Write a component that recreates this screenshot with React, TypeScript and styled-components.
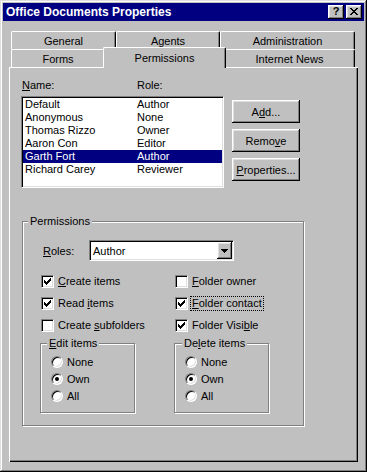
import React from "react";
import styled, { createGlobalStyle, css } from "styled-components";

const Global = createGlobalStyle`
  html, body { margin: 0; padding: 0; background: #c0c0c0; }
  body { font-family: "Liberation Sans", Arial, sans-serif; font-size: 11px; color: #000; }
  * { box-sizing: border-box; }
`;

const raised = css`
  box-shadow: inset -1px -1px #000, inset 1px 1px #fff, inset -2px -2px #808080, inset 2px 2px #dfdfdf;
`;

const sunken = css`
  border: 1px solid;
  border-color: #808080 #fff #fff #808080;
  box-shadow: inset 1px 1px #000, inset -1px -1px #dfdfdf;
`;

const Window = styled.div`
  width: 367px;
  height: 472px;
  background: #c0c0c0;
  padding: 3px;
  box-shadow: inset -1px -1px #000, inset 1px 1px #dfdfdf, inset -2px -2px #808080, inset 2px 2px #fff;
  display: flex;
  flex-direction: column;
`;

const TitleBar = styled.div`
  height: 18px;
  background: #000080;
  display: flex;
  align-items: center;
  padding: 0 2px 0 3px;
  gap: 2px;
`;

const TitleText = styled.div`
  flex: 1;
  color: #fff;
  font-weight: bold;
  font-size: 12px;
`;

const CaptionButton = styled.div`
  width: 16px;
  height: 14px;
  background: #c0c0c0;
  ${raised};
  display: flex;
  align-items: center;
  justify-content: center;
  font-weight: bold;
  font-size: 11px;
  line-height: 1;
  padding-bottom: 1px;
`;

const Body = styled.div`
  flex: 1;
  display: flex;
  flex-direction: column;
  padding: 10px 6px 7px 6px;
`;

const TabRow = styled.div`
  display: flex;
  align-items: flex-end;
  height: 18px;
  padding-left: 2px;
`;

const Tab = styled.div<{ $w: number; $sel?: boolean }>`
  width: ${(p) => p.$w}px;
  height: 18px;
  flex: none;
  display: flex;
  align-items: center;
  justify-content: center;
  background: #c0c0c0;
  border-top: 1px solid #fff;
  border-left: 1px solid #fff;
  border-right: 1px solid #000;
  border-radius: 2px 2px 0 0;
  box-shadow: inset -1px 0 #808080;
  ${(p) =>
    p.$sel &&
    css`
      width: ${p.$w + 4}px;
      height: 21px;
      margin: 0 -2px -1px;
      position: relative;
      z-index: 1;
    `}
`;

const Panel = styled.div`
  flex: 1;
  box-shadow: inset 1px 1px #fff, inset -1px -1px #000, inset -2px -2px #808080;
  padding: 12px 0 0 12px;
`;

const TopSection = styled.div`
  display: flex;
`;

const LeftCol = styled.div`
  width: 203px;
`;

const LabelRow = styled.div`
  display: flex;
  height: 13px;
  line-height: 13px;
  margin-bottom: 4px;
`;

const ColLabel = styled.div<{ $w?: number }>`
  width: ${(p) => (p.$w ? `${p.$w}px` : "auto")};
  padding-left: ${(p) => (p.$w ? 1 : 0)}px;
`;

const ListBox = styled.div`
  width: 203px;
  height: 92px;
  background: #fff;
  ${sunken};
  padding: 1px;
`;

const ListRow = styled.div<{ $sel?: boolean }>`
  display: flex;
  height: 13px;
  line-height: 13px;
  padding-left: 2px;
  background: ${(p) => (p.$sel ? "#000080" : "transparent")};
  color: ${(p) => (p.$sel ? "#fff" : "#000")};
`;

const NameCell = styled.div`
  width: 112px;
`;

const ButtonCol = styled.div`
  display: flex;
  flex-direction: column;
  gap: 6px;
  margin: 21px 0 0 8px;
`;

const Button = styled.button`
  width: 68px;
  height: 23px;
  background: #c0c0c0;
  border: none;
  ${raised};
  font: inherit;
  color: #000;
  padding: 0;
`;

const U = styled.span`
  text-decoration: underline;
  text-underline-offset: 1px;
`;

const Group = styled.div<{ $w: number; $h: number }>`
  position: relative;
  width: ${(p) => p.$w}px;
  height: ${(p) => p.$h}px;
  flex: none;
  border: 1px solid #808080;
  box-shadow: inset 1px 1px #fff, 1px 1px #fff;
`;

const PermGroup = styled(Group)`
  margin: 33px 0 0 1px;
  padding: 18px 0 0 18px;
`;

const Legend = styled.span<{ $left: number }>`
  position: absolute;
  top: -7px;
  left: ${(p) => p.$left}px;
  padding: 0 2px;
  background: #c0c0c0;
  line-height: 13px;
`;

const RolesRow = styled.div`
  display: flex;
  align-items: center;
  height: 21px;
`;

const RolesLabel = styled.div`
  width: 46px;
  margin-left: 2px;
`;

const Select = styled.div`
  width: 145px;
  height: 21px;
  background: #fff;
  ${sunken};
  display: flex;
  align-items: center;
  padding: 1px 1px 1px 3px;
`;

const SelectValue = styled.div`
  flex: 1;
`;

const DropButton = styled.div`
  width: 15px;
  height: 17px;
  background: #c0c0c0;
  ${raised};
  display: flex;
  align-items: center;
  justify-content: center;
`;

const CheckGrid = styled.div`
  margin-top: 9px;
  display: grid;
  grid-template-columns: 134px 1fr;
  grid-auto-rows: 22px;
`;

const OptionItem = styled.label`
  display: flex;
  align-items: center;
  gap: 4px;
  white-space: nowrap;
`;

const Box = styled.span`
  width: 13px;
  height: 13px;
  flex: none;
  background: #fff;
  ${sunken};
  display: flex;
  align-items: center;
  justify-content: center;
`;

const Focus = styled.span`
  outline: 1px dotted #000;
  outline-offset: 0;
  padding: 0 1px;
  margin-left: -1px;
  line-height: 13px;
`;

const SubRow = styled.div`
  display: flex;
  gap: 39px;
  margin: 7px 0 0 -1px;
`;

const SubGroup = styled(Group)`
  padding: 9px 0 0 10px;
`;

const RadioRow = styled.div`
  height: 17px;
  display: flex;
  align-items: center;
`;

const Radio = styled.span`
  width: 12px;
  height: 12px;
  flex: none;
  border-radius: 50%;
  background: #fff;
  border: 1px solid;
  border-color: #808080 #fff #fff #808080;
  box-shadow: inset 1px 1px #000, inset -1px -1px #dfdfdf;
  display: flex;
  align-items: center;
  justify-content: center;
`;

const Dot = styled.span`
  width: 4px;
  height: 4px;
  border-radius: 50%;
  background: #000;
`;

const CheckMark = () => (
  <svg width="7" height="7" viewBox="0 0 7 7" shapeRendering="crispEdges">
    <path
      fill="#000"
      d="M6 0h1v1h-1z M5 1h2v1h-2z M0 2h1v1h-1z M4 2h3v1h-3z M0 3h2v1h-2z M3 3h3v1h-3z M0 4h5v1h-5z M1 5h3v1h-3z M2 6h1v1h-1z"
    />
  </svg>
);

const CloseGlyph = () => (
  <svg width="8" height="7" viewBox="0 0 8 7" shapeRendering="crispEdges">
    <path
      fill="#000"
      d="M0 0h2v1h-2z M6 0h2v1h-2z M1 1h2v1h-2z M5 1h2v1h-2z M2 2h4v1h-4z M3 3h2v1h-2z M2 4h4v1h-4z M1 5h2v1h-2z M5 5h2v1h-2z M0 6h2v1h-2z M6 6h2v1h-2z"
    />
  </svg>
);

const Arrow = () => (
  <svg width="7" height="4" viewBox="0 0 7 4" shapeRendering="crispEdges">
    <path fill="#000" d="M0 0h7v1h-7z M1 1h5v1h-5z M2 2h3v1h-3z M3 3h1v1h-1z" />
  </svg>
);

const Check = ({ checked, children }: { checked?: boolean; children: React.ReactNode }) => (
  <OptionItem>
    <Box>{checked && <CheckMark />}</Box>
    {children}
  </OptionItem>
);

const RadioOpt = ({ checked, label }: { checked?: boolean; label: string }) => (
  <RadioRow>
    <OptionItem>
      <Radio>{checked && <Dot />}</Radio>
      {label}
    </OptionItem>
  </RadioRow>
);

const members = [
  ["Default", "Author"],
  ["Anonymous", "None"],
  ["Thomas Rizzo", "Owner"],
  ["Aaron Con", "Editor"],
  ["Garth Fort", "Author"],
  ["Richard Carey", "Reviewer"],
];

export default function App() {
  return (
    <>
      <Global />
      <Window>
        <TitleBar>
          <TitleText>Office Documents Properties</TitleText>
          <CaptionButton>?</CaptionButton>
          <CaptionButton>
            <CloseGlyph />
          </CaptionButton>
        </TitleBar>
        <Body>
          <TabRow>
            <Tab $w={105}>General</Tab>
            <Tab $w={104}>Agents</Tab>
            <Tab $w={135}>Administration</Tab>
          </TabRow>
          <TabRow>
            <Tab $w={94}>Forms</Tab>
            <Tab $w={119} $sel>
              Permissions
            </Tab>
            <Tab $w={131}>Internet News</Tab>
          </TabRow>
          <Panel>
            <TopSection>
              <LeftCol>
                <LabelRow>
                  <ColLabel $w={116}>
                    <U>N</U>ame:
                  </ColLabel>
                  <ColLabel>Role:</ColLabel>
                </LabelRow>
                <ListBox>
                  {members.map(([n, r]) => (
                    <ListRow key={n} $sel={n === "Garth Fort"}>
                      <NameCell>{n}</NameCell>
                      <div>{r}</div>
                    </ListRow>
                  ))}
                </ListBox>
              </LeftCol>
              <ButtonCol>
                <Button>
                  A<U>d</U>d...
                </Button>
                <Button>
                  Remo<U>v</U>e
                </Button>
                <Button>
                  <U>P</U>roperties...
                </Button>
              </ButtonCol>
            </TopSection>
            <PermGroup $w={282} $h={205}>
              <Legend $left={5}>Permissions</Legend>
              <RolesRow>
                <RolesLabel>
                  <U>R</U>oles:
                </RolesLabel>
                <Select>
                  <SelectValue>Author</SelectValue>
                  <DropButton>
                    <Arrow />
                  </DropButton>
                </Select>
              </RolesRow>
              <CheckGrid>
                <Check checked>
                  <span>
                    <U>C</U>reate items
                  </span>
                </Check>
                <Check>
                  <span>
                    <U>F</U>older owner
                  </span>
                </Check>
                <Check checked>
                  <span>
                    Read <U>i</U>tems
                  </span>
                </Check>
                <Check checked>
                  <Focus>
                    <U>F</U>older contact
                  </Focus>
                </Check>
                <Check>
                  <span>
                    Create <U>s</U>ubfolders
                  </span>
                </Check>
                <Check checked>
                  <span>
                    Folder Visi<U>b</U>le
                  </span>
                </Check>
              </CheckGrid>
              <SubRow>
                <SubGroup $w={95} $h={70}>
                  <Legend $left={6}>
                    <U>E</U>dit items
                  </Legend>
                  <RadioOpt label="None" />
                  <RadioOpt label="Own" checked />
                  <RadioOpt label="All" />
                </SubGroup>
                <SubGroup $w={95} $h={70}>
                  <Legend $left={7}>
                    De<U>l</U>ete items
                  </Legend>
                  <RadioOpt label="None" />
                  <RadioOpt label="Own" checked />
                  <RadioOpt label="All" />
                </SubGroup>
              </SubRow>
            </PermGroup>
          </Panel>
        </Body>
      </Window>
    </>
  );
}
